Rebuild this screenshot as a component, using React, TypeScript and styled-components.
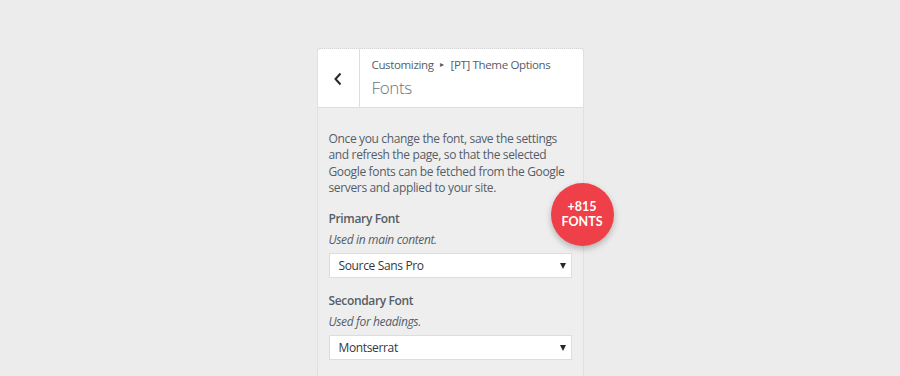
import React from 'react';
import styled, {createGlobalStyle} from 'styled-components';

const GlobalStyle = createGlobalStyle`
  html, body {
    margin: 0;
    padding: 0;
    background: #ececec;
    font-family: "Open Sans", "Noto Sans", sans-serif;
  }
`;

type FontSetting = {
    title: string;
    hint: string;
    value: string;
};

const settings: FontSetting[] = [
    {title: 'Primary Font', hint: 'Used in main content.', value: 'Source Sans Pro'},
    {title: 'Secondary Font', hint: 'Used for headings.', value: 'Montserrat'},
];

export default function App() {
    return (
        <>
            <GlobalStyle/>
            <Page>
                <Panel>
                    <Header>
                        <BackButton aria-label="Back">
                            <svg width="10" height="14" viewBox="0 0 10 14">
                                <path d="M7.5 1.5 L2.5 7 L7.5 12.5" fill="none" stroke="#23282d" strokeWidth="2"/>
                            </svg>
                        </BackButton>
                        <TitleBlock>
                            <Crumbs>Customizing <Sep>▸</Sep> [PT] Theme Options</Crumbs>
                            <Title>Fonts</Title>
                        </TitleBlock>
                    </Header>
                    <Body>
                        <Intro>
                            Once you change the font, save the settings and refresh the page, so that the
                            selected Google fonts can be fetched from the Google servers and applied to your site.
                        </Intro>
                        {settings.map((item) => (
                            <Control key={item.title}>
                                <ControlTitle>{item.title}</ControlTitle>
                                <ControlHint>{item.hint}</ControlHint>
                                <Select>
                                    <span>{item.value}</span>
                                    <Arrow/>
                                </Select>
                            </Control>
                        ))}
                    </Body>
                    <Badge>
                        <span>+815</span>
                        <span>FONTS</span>
                    </Badge>
                </Panel>
            </Page>
        </>
    );
}

const Page = styled.div`
  display: flex;
  justify-content: center;
  padding-top: 48px;
  height: 328px;
  overflow: hidden;
`;

const Panel = styled.div`
  position: relative;
  width: 265px;
  border: 1px dotted #d4d4d4;
  border-bottom: none;
  border-radius: 3px 3px 0 0;
  background: #eeeeee;
  display: flex;
  flex-direction: column;
  letter-spacing: -0.35px;
`;

const Header = styled.div`
  display: flex;
  height: 58px;
  background: #fff;
  border-bottom: 1px solid #dddddd;
  border-radius: 3px 3px 0 0;
`;

const BackButton = styled.div`
  width: 41px;
  border-right: 1px solid #dddddd;
  display: flex;
  align-items: center;
  justify-content: center;
  padding-top: 2px;
`;

const TitleBlock = styled.div`
  padding: 6px 0 0 12px;
  color: #555d66;
`;

const Crumbs = styled.div`
  font-size: 11.5px;
  line-height: 17px;
`;

const Sep = styled.span`
  font-size: 8px;
  margin: 0 4px;
  vertical-align: 2px;
`;

const Title = styled.div`
  font-size: 17px;
  font-weight: 300;
  line-height: 26px;
  margin-top: 2px;
  color: #6b737b;
`;

const Body = styled.div`
  padding: 23px 10px 0 11px;
`;

const Intro = styled.p`
  margin: 0 0 13px;
  font-size: 12px;
  line-height: 16.3px;
  color: #555d66;
`;

const Control = styled.div`
  margin-bottom: 13px;
`;

const ControlTitle = styled.div`
  font-size: 12px;
  font-weight: 600;
  line-height: 20px;
  color: #555d66;
`;

const ControlHint = styled.div`
  font-size: 12px;
  font-style: italic;
  line-height: 16px;
  margin-top: 3px;
  color: #555d66;
`;

const Select = styled.div`
  margin-top: 5px;
  width: 243px;
  height: 25px;
  box-sizing: border-box;
  background: #fff;
  border: 1px solid #dddddd;
  display: flex;
  align-items: center;
  justify-content: space-between;
  padding: 0 5px 0 9px;
  font-size: 12px;
  color: #32373c;
`;

const Arrow = styled.span`
  width: 0;
  height: 0;
  border-left: 3.5px solid transparent;
  border-right: 3.5px solid transparent;
  border-top: 6px solid #23282d;
`;

const Badge = styled.div`
  position: absolute;
  left: 233px;
  top: 134px;
  width: 63px;
  height: 63px;
  border-radius: 50%;
  background: #ef3f48;
  box-shadow: 0 3px 6px rgba(0, 0, 0, 0.25);
  display: flex;
  flex-direction: column;
  align-items: center;
  justify-content: center;
  color: #fff;
  font-family: Lato, "Noto Sans", sans-serif;
  font-weight: 700;
  font-size: 12.5px;
  line-height: 15px;
  letter-spacing: 0;
  padding-bottom: 1px;
  box-sizing: border-box;
`;
